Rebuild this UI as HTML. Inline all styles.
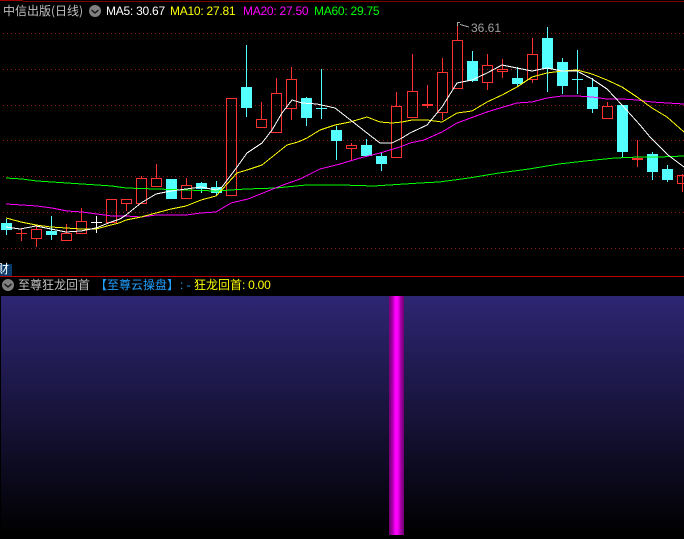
<!DOCTYPE html>
<html lang="zh">
<head>
<meta charset="utf-8">
<style>
html,body{margin:0;padding:0;background:#000;}
#r{position:relative;width:684px;height:539px;overflow:hidden;background:#000;font-family:"Liberation Sans","Noto Sans CJK SC",sans-serif;font-size:12px;line-height:14px;}
#r span{position:absolute;white-space:nowrap;}
#r span.m{letter-spacing:-.25px;}
.ch{font-family:"WenQuanYi Zen Hei","Noto Sans CJK SC",sans-serif;}
svg{position:absolute;left:0;top:0;}
#p{position:absolute;left:1px;top:296px;width:683px;height:239px;background:linear-gradient(#2e2673,#000);}
#b{position:absolute;left:389px;top:296px;width:15px;height:239px;background:linear-gradient(90deg,#700070,#a000a0 20%,#d000d0 32%,#ff00ff 42%,#ff00ff 58%,#d000d0 68%,#a000a0 80%,#700070);}
</style>
</head>
<body>
<div id="r">
<svg width="684" height="539" viewBox="0 0 684 539" fill="none" shape-rendering="crispEdges">
<path d="M0 .5H23" stroke="#a00000"/>
<path d="M23 1.5H684" stroke="#800000"/>
<path d="M3 33.5H684M3 69.5H684M3 105.5H684M3 140.5H684M3 176.5H684M3 212.5H684M3 248.5H684" stroke="#9a1414" stroke-dasharray="1 3"/>
<path stroke="#ff3232" d="
M16 233.5H27M21.5 228V241
M36.5 226V229M36.5 238V247M31.5 229.5H41.5V238.5H31.5Z
M66.5 224V233M61.5 233.5H71.5V240.5H61.5Z
M81.5 208V221M76.5 221.5H86.5V233.5H76.5Z
M106.5 199.5H116.5V222.5H106.5Z
M126.5 203V211M121.5 199.5H131.5V203.5H121.5Z
M141.5 176V178M136.5 178.5H146.5V203.5H136.5Z
M156.5 164V178M156.5 186V187M151.5 178.5H161.5V186.5H151.5Z
M186.5 178V185M181.5 185.5H191.5V198.5H181.5Z
M226.5 98.5H236.5V195.5H226.5Z
M261.5 102V119M256.5 119.5H266.5V127.5H256.5Z
M276.5 78V93M271.5 93.5H281.5V132.5H271.5Z
M291.5 67V79M291.5 108V120M286.5 79.5H296.5V108.5H286.5Z
M351.5 143V145M351.5 148V160M346.5 145.5H356.5V148.5H346.5Z
M396.5 92V106M396.5 157V158M391.5 106.5H401.5V157.5H391.5Z
M412.5 54V91M412.5 117V118M407.5 91.5H417.5V117.5H407.5Z
M427.5 85V108M422 104.5H433M422 105.5H433
M442.5 58V72M442.5 112V120M437.5 72.5H447.5V112.5H437.5Z
M457.5 22V40M452.5 40.5H462.5V88.5H452.5Z
M487.5 54V65M487.5 82V90M482.5 65.5H492.5V82.5H482.5Z
M502.5 59V69M502.5 71V78M497.5 69.5H507.5V71.5H497.5Z
M532.5 38V54M532.5 79V83M527.5 54.5H537.5V79.5H527.5Z
M607.5 102V106M607.5 118V119M602.5 106.5H612.5V118.5H602.5Z
M637.5 140V167M632 158.5H643M632 159.5H643
M682.5 174V192M677.5 175.5H684M677.5 183.5H684M677.5 175V184
"/>
<g fill="#54ffff">
<rect x="1" y="223" width="11" height="7"/><rect x="46" y="231" width="11" height="4"/>
<rect x="166" y="179" width="11" height="20"/><rect x="196" y="183" width="11" height="6"/>
<rect x="211" y="187" width="11" height="6"/><rect x="241" y="87" width="11" height="21"/>
<rect x="301" y="98" width="11" height="20"/><rect x="331" y="130" width="11" height="11"/>
<rect x="361" y="145" width="11" height="11"/><rect x="376" y="156" width="11" height="8"/>
<rect x="467" y="61" width="11" height="20"/><rect x="512" y="78" width="11" height="6"/>
<rect x="542" y="38" width="11" height="31"/><rect x="557" y="62" width="11" height="24"/>
<rect x="587" y="87" width="11" height="22"/><rect x="617" y="105" width="11" height="47"/>
<rect x="647" y="154" width="11" height="18"/><rect x="662" y="169" width="11" height="11"/>
</g>
<path stroke="#54ffff" d="M6.5 219V235M51.5 216V240M171.5 179V180M201.5 182V193M216.5 181V195M246.5 45V117M306.5 97V126M321.5 69V119M316 108.5H327M336.5 126V160M366.5 139V145M381.5 152V171M472.5 51V82M517.5 67V87M547.5 27V92M562.5 58V94M577.5 50V94M572 79.5H583M592.5 78V113M622.5 152V157M652.5 152V180M667.5 165V182"/>
<path stroke="#fff" d="M91 222.5H102M96.5 216V233"/>
<g stroke-width="1">
<polyline stroke="#00ff00" points="6,178 22,179 37,181 52,182 67,183 82,184 97,185 112,186 126,188 156,189 186,190 216,191 231,190 246,189 276,188 306,185 342,185 374,186 389,185 420,183 439,182 469,178 499,173 529,169 559,164 585,161 615,158 639,157 659,157 684,156"/>
<polyline stroke="#ff00ff" points="6,204 22,205 37,206 52,208 67,211 82,212 97,214 112,216 126,216 141,217 156,215 171,215 186,215 201,213 216,212 231,203 248,199 263,193 283,185 300,179 320,169 340,164 360,158 380,153 400,147 410,143 424,140 442,132 457,123 487,112 517,103 532,102 547,98 562,96 577,96 592,97 607,99 622,99 637,100 652,102 667,103 684,104"/>
<polyline stroke="#ffff00" points="6,218 21,222 36,225 51,227 66,228 81,229 96,229 111,225 119,223 126,220 141,217 156,213 171,209 186,206 201,200 216,196 228,183 237,173 247,170 262,165 272,157 287,145 298,142 307,138 320,130 335,125 350,122 367,117 380,122 392,123 402,122 412,120 427,120 442,122 457,113 472,111 487,102 502,95 517,87 532,77 547,73 562,71 577,70 592,74 607,80 622,87 637,97 652,108 667,117 684,132"/>
<polyline stroke="#ffffff" points="6,227 20,229 36,226 51,229 66,232 81,231 96,228 111,222 120,219 126,215 141,203 156,194 171,191 186,189 201,187 216,190 222,187 237,167 247,153 262,143 272,130 282,113 292,100 302,103 317,104 335,108 353,122 367,133 380,143 392,143 402,138 410,133 427,125 442,107 457,83 472,80 487,73 502,65 517,68 532,71 547,68 562,71 577,71 592,79 607,89 622,105 640,125 650,137 668,155 684,167"/>
</g>
<path stroke="#a8a8a8" d="M457.5 26V22.5H460M460 24.5L469 27"/>
<path d="M0 276.5H684" stroke="#c00000"/>
<rect x="0" y="264" width="12" height="12" fill="#0a3a6a"/>
<circle cx="95" cy="11" r="6" fill="#808080" shape-rendering="auto"/>
<path d="M91.5 10L95 13L98.5 10" stroke="#111" stroke-width="1.3" shape-rendering="auto"/>
<circle cx="8" cy="285" r="6" fill="#808080" shape-rendering="auto"/>
<path d="M4.5 284L8 287L11.5 284" stroke="#111" stroke-width="1.3" shape-rendering="auto"/>
</svg>
<div id="p"></div>
<div id="b"></div>
<span class="ch" style="left:3px;top:4px;color:#c0c0c0;">中信出版(日线)</span>
<span class="m" style="left:106px;top:4px;color:#fff;">MA5: 30.67</span>
<span class="m" style="left:170px;top:4px;color:#ff0;">MA10: 27.81</span>
<span class="m" style="left:243px;top:4px;color:#f0f;">MA20: 27.50</span>
<span class="m" style="left:314px;top:4px;color:#0f0;">MA60: 29.75</span>
<span style="left:471px;top:21px;color:#a0a0a0;">36.61</span>
<span class="ch" style="left:-3px;top:262px;color:#fff;">财</span>
<span class="ch" style="left:18px;top:278px;color:#c0c0c0;">至尊狂龙回首</span>
<span class="ch" style="left:95px;top:278px;color:#1e9fff;">【至尊云操盘】</span>
<span style="left:180px;top:278px;color:#1e9fff;">: -</span>
<span class="ch" style="left:194px;top:278px;color:#ff0;">狂龙回首</span>
<span class="m" style="left:242px;top:278px;color:#ff0;">: 0.00</span>
</div>
</body>
</html>
